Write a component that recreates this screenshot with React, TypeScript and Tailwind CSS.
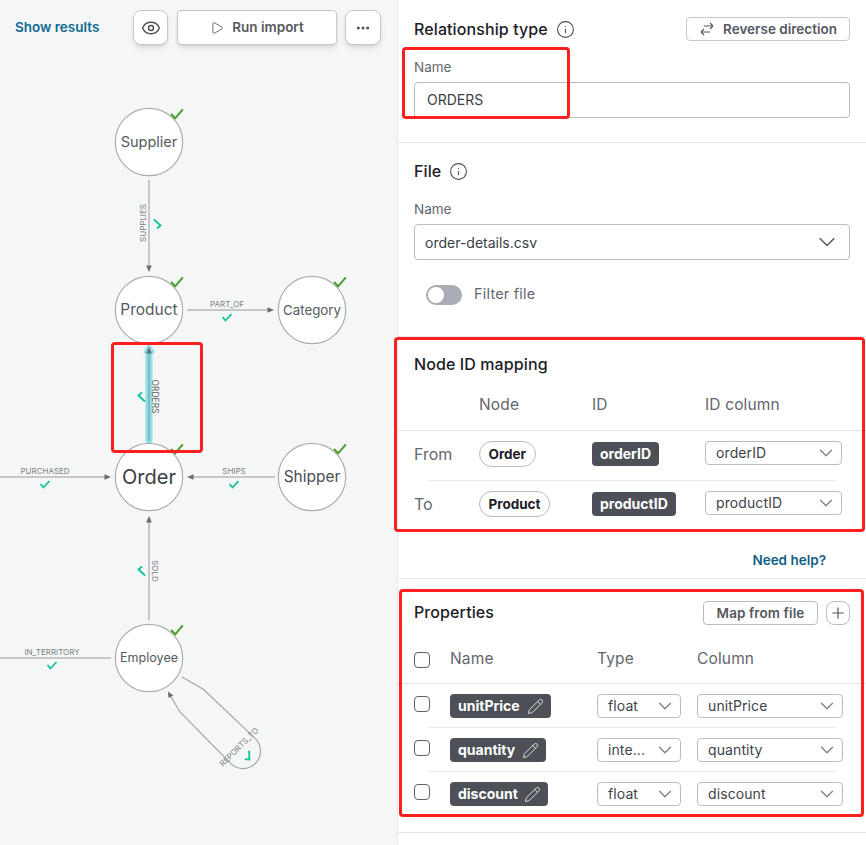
import { ChevronDown, Ellipsis, Eye, Info, Pencil, Play, Plus } from "lucide-react";

const FONT = "font-['Inter','Liberation_Sans',sans-serif]";

const NODES = [
  { label: "Supplier", x: 149, y: 142, size: 14.5, color: "#555b60" },
  { label: "Product", x: 149, y: 310, size: 15.5, color: "#555b60" },
  { label: "Category", x: 312, y: 310, size: 13.3, color: "#555b60" },
  { label: "Order", x: 149, y: 477, size: 20, color: "#3a3d42" },
  { label: "Shipper", x: 312, y: 477, size: 15.5, color: "#4a4e53" },
  { label: "Employee", x: 149, y: 658, size: 12.6, color: "#555b60" },
];

const EDGE_LABELS = [
  { text: "PART_OF", x: 227, y: 307, rotate: 0, size: 8, fill: "#7c8086" },
  { text: "PURCHASED", x: 45, y: 474, rotate: 0, size: 8, fill: "#7c8086" },
  { text: "SHIPS", x: 234, y: 474, rotate: 0, size: 8, fill: "#7c8086" },
  { text: "IN_TERRITORY", x: 52, y: 655, rotate: 0, size: 8, fill: "#7c8086" },
  { text: "SUPPLIES", x: 146, y: 223, rotate: -90, size: 8, fill: "#7c8086" },
  { text: "ORDERS", x: 151.5, y: 396.5, rotate: 90, size: 8.5, fill: "#5a5e64" },
  { text: "SOLD", x: 151.5, y: 571, rotate: 90, size: 8, fill: "#7c8086" },
  { text: "REPORTS_TO", x: 241, y: 749, rotate: -45, size: 8, fill: "#7c8086" },
];

const EDGE_CHECKS = [
  { x: 227, y: 317, rotate: 0 },
  { x: 45, y: 484, rotate: 0 },
  { x: 234, y: 484, rotate: 0 },
  { x: 52, y: 665, rotate: 0 },
  { x: 157, y: 224, rotate: -90 },
  { x: 142, y: 397, rotate: 90 },
  { x: 142, y: 571, rotate: 90 },
  { x: 248, y: 756, rotate: -45 },
];

function Graph() {
  return (
    <svg className="absolute inset-0" width="398" height="845" fill="none">
      {/* edges */}
      <g stroke="#b4b7bb" strokeWidth="1.5">
        <path d="M149 180V268" />
        <path d="M187 310H270" />
        <path d="M0 477H107" />
        <path d="M275 477H191" />
        <path d="M149 620V520" />
        <path d="M0 658H111" />
      </g>
      <path
        d="M182 677L203 689L255.4 738.6A17.5 17.5 0 0 1 230.6 763.4L180 712L170 695"
        stroke="#a3a6aa"
        strokeWidth="1.2"
      />

      {/* highlighted edge */}
      <path d="M149 350V440" stroke="#8fdfe6" strokeWidth="7" strokeLinecap="round" />
      <path d="M149 346l-4 6h8z" fill="#8fdfe6" stroke="#8fdfe6" strokeWidth="3" strokeLinejoin="round" />
      <path d="M149 352V441" stroke="#7aaeb4" strokeWidth="1.5" />

      {/* arrow heads */}
      <g fill="#676c73">
        <path d="M149 272l-2.8-6.5h5.6z" />
        <path d="M274 310l-6.5-2.8v5.6z" />
        <path d="M111 477l-6.5-2.8v5.6z" />
        <path d="M187 477l6.5-2.8v5.6z" />
        <path d="M149 516l-2.8 6.5h5.6z" />
        <path d="M149 347l-2.8 6.5h5.6z" />
        <path d="M168 691.5l0.5 6.5l4.8-2.6z" />
      </g>

      {/* nodes */}
      {NODES.map((n) => (
        <g key={n.label}>
          <circle cx={n.x} cy={n.y} r="33.7" fill="#fff" stroke="#a9acb0" strokeWidth="1.2" />
          <text
            x={n.x}
            y={n.y - 0.5}
            textAnchor="middle"
            dominantBaseline="central"
            fontSize={n.size}
            fill={n.color}
          >
            {n.label}
          </text>
          <path
            d={`M${n.x + 22} ${n.y - 28}l4.2 4.3l7.6 -9`}
            stroke="#4c9a2a"
            strokeWidth="2"
          />
        </g>
      ))}

      {/* edge labels and checks */}
      {EDGE_LABELS.map((l) => (
        <text
          key={l.text}
          transform={`translate(${l.x} ${l.y}) rotate(${l.rotate})`}
          textAnchor="middle"
          fontSize={l.size}
          fill={l.fill}
        >
          {l.text}
        </text>
      ))}
      {EDGE_CHECKS.map((c) => (
        <path
          key={`${c.x}-${c.y}`}
          transform={`translate(${c.x} ${c.y}) rotate(${c.rotate})`}
          d="M-4.5 0L-1.5 3.5L4.5 -3"
          stroke="#10c295"
          strokeWidth="1.8"
        />
      ))}
    </svg>
  );
}

function Select({ value, className }: { value: string; className: string }) {
  return (
    <div
      className={`flex h-6 shrink-0 items-center justify-between rounded border border-[#b9bcc1] bg-white pl-[10px] pr-[4px] text-[14px] tracking-[0.1px] text-[#3f444b] ${className}`}
    >
      <span className="-translate-y-px">{value}</span>
      <ChevronDown className="h-[22px] w-[22px] text-[#777c83]" strokeWidth={1.3} />
    </div>
  );
}

function Pill({ label }: { label: string }) {
  return (
    <span className="inline-flex h-[26px] items-center rounded-full border border-[#b9bcc1] px-[8.5px] text-[13.5px] font-bold text-[#1c2026]">
      {label}
    </span>
  );
}

function IdBadge({ label }: { label: string }) {
  return (
    <span className="inline-flex h-6 items-center rounded bg-[#4d5057] px-2 text-[14px] font-bold text-white">
      {label}
    </span>
  );
}

function Checkbox() {
  return <span className="h-4 w-4 shrink-0 rounded-[4px] border border-[#5e6269] bg-white" />;
}

const TITLE = "text-[16px] font-medium tracking-[0.1px] leading-6";
const LABEL = "text-[13.5px] leading-4 text-[#62666d]";
const COLUMN_HEAD = "text-[15.5px] leading-5 tracking-[0.15px] text-[#62666d]";
const FIELD = "flex h-[36px] items-center rounded border border-[#b9bcc1] bg-white text-[14px] text-[#3a3f46]";

const PROPS = [
  { name: "unitPrice", type: "float", column: "unitPrice", width: "w-[101px]" },
  { name: "quantity", type: "inte...", column: "quantity", width: "w-[96px]" },
  { name: "discount", type: "float", column: "discount", width: "w-[98px]" },
];

export default function App() {
  return (
    <div className={`relative flex h-[845px] w-[866px] overflow-hidden bg-white ${FONT}`}>
      {/* Canvas */}
      <div className="relative h-full w-[398px] shrink-0 border-r border-[#e6e8ea] bg-[#f5f7f6]">
        <Graph />
        <div className="relative flex h-[54px] items-center pl-[15px] pt-[1px]">
          <span className="w-[118px] text-[13.5px] font-semibold text-[#0f6a94]">Show results</span>
          <button
            type="button"
            className="flex h-[35px] w-[35px] items-center justify-center rounded-lg border border-[#c4c7cb] bg-white shadow-md"
          >
            <Eye className="h-5 w-5 text-[#4d5157]" strokeWidth={1.7} />
          </button>
          <button
            type="button"
            className="ml-[9px] flex h-[35px] w-[160px] items-center justify-center gap-2 rounded border border-[#c4c7cb] bg-white text-[13.5px] font-semibold text-[#54585f] shadow-md"
          >
            <Play className="h-[14px] w-[14px]" strokeWidth={1.5} />
            Run import
          </button>
          <button
            type="button"
            className="ml-[8px] flex h-[35px] w-[36px] items-center justify-center rounded-lg border border-[#c4c7cb] bg-white shadow-md"
          >
            <Ellipsis className="h-4 w-4 text-[#4d5157]" strokeWidth={2.5} />
          </button>
        </div>
      </div>

      {/* Side panel */}
      <div className="w-[468px] shrink-0 text-[#1c2026]">
        <section className="h-[143px] border-b border-[#e3e5e7] px-4 pt-[17px]">
          <div className="flex h-6 items-center justify-between">
            <div className="flex items-center gap-2">
              <h2 className={TITLE}>Relationship type</h2>
              <Info className="h-[19px] w-[19px] text-[#4d5157]" strokeWidth={1.4} />
            </div>
            <button
              type="button"
              className="flex h-6 w-[164px] items-center justify-center gap-2 rounded border border-[#c4c7cb] text-[13.5px] font-semibold text-[#54585f]"
            >
              <svg width="16" height="16" viewBox="0 0 24 24" fill="none" stroke="#54585f" strokeWidth="1.6">
                <path d="M7.5 21L3 16.5m0 0L7.5 12M3 16.5h13.5m0-13.5L21 7.5m0 0L16.5 12M21 7.5H7.5" />
              </svg>
              Reverse direction
            </button>
          </div>
          <div className={`mt-[18px] ${LABEL}`}>Name</div>
          <div className={`${FIELD} mt-[7px] pl-3`}>
            <span className="-translate-y-px">ORDERS</span>
          </div>
        </section>

        <section className="h-[194px] border-b border-[#e3e5e7] px-4 pt-[16px]">
          <div className="flex h-6 items-center gap-2">
            <h2 className={TITLE}>File</h2>
            <Info className="h-[19px] w-[19px] text-[#4d5157]" strokeWidth={1.4} />
          </div>
          <div className={`mt-[18px] ${LABEL}`}>Name</div>
          <div className={`${FIELD} mt-[7px] justify-between pl-[10px] pr-[8px] text-[13.5px]`}>
            order-details.csv
            <ChevronDown className="h-7 w-7 text-[#4d5157]" strokeWidth={1.1} />
          </div>
          <div className="mt-6 flex items-center pl-3">
            <span className="flex h-5 w-9 items-center rounded-full bg-[#a9acb2] pl-[2px]">
              <span className="h-4 w-4 rounded-full bg-white" />
            </span>
            <span className="ml-3 -translate-y-px text-[14.5px] tracking-[0.2px] text-[#62666d]">Filter file</span>
          </div>
        </section>

        <section className="h-[242px] border-b border-[#e3e5e7]">
          <h2 className={`px-4 pt-[15px] ${TITLE}`}>Node ID mapping</h2>
          <div className={`mt-[19px] flex h-[36px] border-b border-[#e3e5e7] pl-[81px] ${COLUMN_HEAD}`}>
            <span className="w-[113px]">Node</span>
            <span className="w-[113px]">ID</span>
            <span>ID column</span>
          </div>
          <div className="mx-[30px] flex h-[50px] items-start border-b border-[#e8eaec] pt-[10px]">
            <span className="-ml-[14px] w-[65px] shrink-0 pt-[1px] text-[16px] text-[#62666d]">From</span>
            <span className="w-[113px] shrink-0">
              <Pill label="Order" />
            </span>
            <span className="w-[113px] shrink-0">
              <IdBadge label="orderID" />
            </span>
            <Select value="orderID" className="w-[137px]" />
          </div>
          <div className="mx-[30px] flex h-[49px] items-start pt-[10px]">
            <span className="-ml-[14px] w-[65px] shrink-0 pt-[1px] text-[16px] text-[#62666d]">To</span>
            <span className="w-[113px] shrink-0">
              <Pill label="Product" />
            </span>
            <span className="w-[113px] shrink-0">
              <IdBadge label="productID" />
            </span>
            <Select value="productID" className="w-[137px]" />
          </div>
          <div className="pr-10 pt-[20px] text-right text-[13.5px] font-semibold leading-5 text-[#0f5f87]">Need help?</div>
        </section>

        <section className="h-[254px] border-b border-[#e3e5e7]">
          <div className="flex items-center justify-between px-4 pt-[22px]">
            <h2 className={`-mt-[2px] ${TITLE}`}>Properties</h2>
            <div className="flex gap-2">
              <button
                type="button"
                className="flex h-6 w-[115px] items-center justify-center rounded border border-[#b9bcc1] text-[13.5px] font-semibold tracking-[0.1px] text-[#54585f]"
              >
                Map from file
              </button>
              <button
                type="button"
                className="flex h-6 w-6 items-center justify-center rounded-lg border border-[#b9bcc1] text-[#54585f]"
              >
                <Plus className="h-[18px] w-[18px]" strokeWidth={1.6} />
              </button>
            </div>
          </div>
          <div className={`flex h-[59px] items-start border-b border-[#e3e5e7] pl-4 pt-[24px] ${COLUMN_HEAD}`}>
            <span className="flex w-9 pt-[3px]">
              <Checkbox />
            </span>
            <span className="w-[147px]">Name</span>
            <span className="w-[100px]">Type</span>
            <span>Column</span>
          </div>
          {PROPS.map((p, i) => (
            <div
              key={p.name}
              className={`mx-[30px] flex h-[44px] items-start pt-[10px] ${i < 2 ? "border-b border-[#e8eaec]" : ""}`}
            >
              <span className="-ml-[14px] flex w-9 shrink-0 pt-[2px]">
                <Checkbox />
              </span>
              <span className="w-[147px] shrink-0">
                <span className={`flex h-6 items-center justify-between rounded bg-[#4d5057] pl-2 pr-[7px] text-[14px] font-bold text-white ${p.width}`}>
                  <span className="-translate-y-px">{p.name}</span>
                  <Pencil className="h-[17px] w-[17px] text-[#e4e5e7]" strokeWidth={1.3} />
                </span>
              </span>
              <Select value={p.type} className="mr-4 w-[84px]" />
              <Select value={p.column} className="w-[146px]" />
            </div>
          ))}
        </section>
      </div>

      {/* Annotation boxes drawn over the screenshot */}
      <div className="absolute left-[402px] top-[47px] h-[72px] w-[168px] rounded-sm border-[3px] border-[#fb1f1f]" />
      <div className="absolute left-[111px] top-[342px] h-[111px] w-[92px] rounded-sm border-[3px] border-[#fb1f1f]" />
      <div className="absolute left-[394px] top-[337px] h-[195px] w-[471px] rounded-sm border-[3px] border-[#fb1f1f]" />
      <div className="absolute left-[399px] top-[589px] h-[228px] w-[465px] rounded-sm border-[3px] border-[#fb1f1f]" />
    </div>
  );
}
